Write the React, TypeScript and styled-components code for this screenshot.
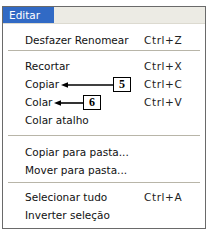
import styled, { createGlobalStyle } from 'styled-components'

type Item =
  | { kind: 'row'; label: string; shortcut?: string }
  | { kind: 'sep'; above: number; below: number }

const ITEMS: Item[] = [
  { kind: 'row', label: 'Desfazer Renomear', shortcut: 'Ctrl+Z' },
  { kind: 'sep', above: 1, below: 5 },
  { kind: 'row', label: 'Recortar', shortcut: 'Ctrl+X' },
  { kind: 'row', label: 'Copiar', shortcut: 'Ctrl+C' },
  { kind: 'row', label: 'Colar', shortcut: 'Ctrl+V' },
  { kind: 'row', label: 'Colar atalho' },
  { kind: 'sep', above: 6, below: 6 },
  { kind: 'row', label: 'Copiar para pasta...' },
  { kind: 'row', label: 'Mover para pasta...' },
  { kind: 'sep', above: 3, below: 4 },
  { kind: 'row', label: 'Selecionar tudo', shortcut: 'Ctrl+A' },
  { kind: 'row', label: 'Inverter seleção' },
]

// callouts, coords relative to the frame's padding box
const CALLOUTS = [
  { n: '5', boxX: 110, boxY: 70, tipX: 58, y: 78 },
  { n: '6', boxX: 80, boxY: 88, tipX: 51, y: 96 },
]

const GlobalStyle = createGlobalStyle`
  html, body {
    margin: 0;
    padding: 0;
    background: #fff;
  }
`

export default function App() {
  return (
    <>
      <GlobalStyle />
      <Frame>
        <MenuBar>
          <BarItem $active>Editar</BarItem>
        </MenuBar>
        <Panel>
          {ITEMS.map((it, i) =>
            it.kind === 'sep' ? (
              <Separator key={i} $above={it.above} $below={it.below} />
            ) : (
              <Row key={i}>
                <span>{it.label}</span>
                <Shortcut>{it.shortcut ?? ''}</Shortcut>
              </Row>
            ),
          )}
        </Panel>
        {CALLOUTS.map((c) => (
          <Callout key={c.n} c={c} />
        ))}
      </Frame>
    </>
  )
}

function Callout({ c }: { c: (typeof CALLOUTS)[number] }) {
  const len = c.boxX - c.tipX
  return (
    <>
      <Arrow
        width={len}
        height={8}
        viewBox={`0 0 ${len} 8`}
        style={{ left: c.tipX, top: c.y - 4 }}
      >
        <line x1={5} y1={4} x2={len} y2={4} stroke='#000' strokeWidth={1.6} />
        <polygon points='0,4 7,1.2 7,6.8' fill='#000' />
      </Arrow>
      <NumBox style={{ left: c.boxX, top: c.boxY }}>{c.n}</NumBox>
    </>
  )
}

const Frame = styled.div`
  position: relative;
  width: 202px;
  margin: 6px 0 0 2px;
  border: 1px solid #6a6a6a;
  background: #fff;
  font-family: 'DejaVu Sans', 'Liberation Sans', sans-serif;
  font-size: 10.5px;
  color: #111;
`

const MenuBar = styled.div`
  display: flex;
  height: 16px;
  background: #ecebe4;
  border-bottom: 1px solid #dcdad0;
`

const BarItem = styled.div<{ $active?: boolean }>`
  display: flex;
  align-items: center;
  width: 51px;
  padding-left: 6px;
  box-sizing: border-box;
  background: ${(p) => (p.$active ? '#316ac5' : 'transparent')};
  color: ${(p) => (p.$active ? '#fff' : '#000')};
`

const Panel = styled.div`
  display: flex;
  flex-direction: column;
  padding: 7px 0 4px;
`

const Row = styled.div`
  display: grid;
  grid-template-columns: 119px 1fr;
  align-items: center;
  height: 18px;
  padding-left: 22px;
  white-space: nowrap;
`

const Shortcut = styled.span`
  color: #222;
  letter-spacing: 0.6px;
`

const Separator = styled.div<{ $above: number; $below: number }>`
  margin: ${(p) => p.$above}px 5px ${(p) => p.$below}px;
  border-top: 1px solid #b8b5a8;
  border-bottom: 1px solid #fff;
`

const Arrow = styled.svg`
  position: absolute;
  overflow: visible;
`

const NumBox = styled.div`
  position: absolute;
  display: flex;
  align-items: center;
  justify-content: center;
  width: 18px;
  height: 15px;
  box-sizing: border-box;
  border: 1px solid #000;
  background: #fff;
  font-family: 'Liberation Serif', serif;
  font-weight: 700;
  font-size: 12px;
  color: #000;
`
